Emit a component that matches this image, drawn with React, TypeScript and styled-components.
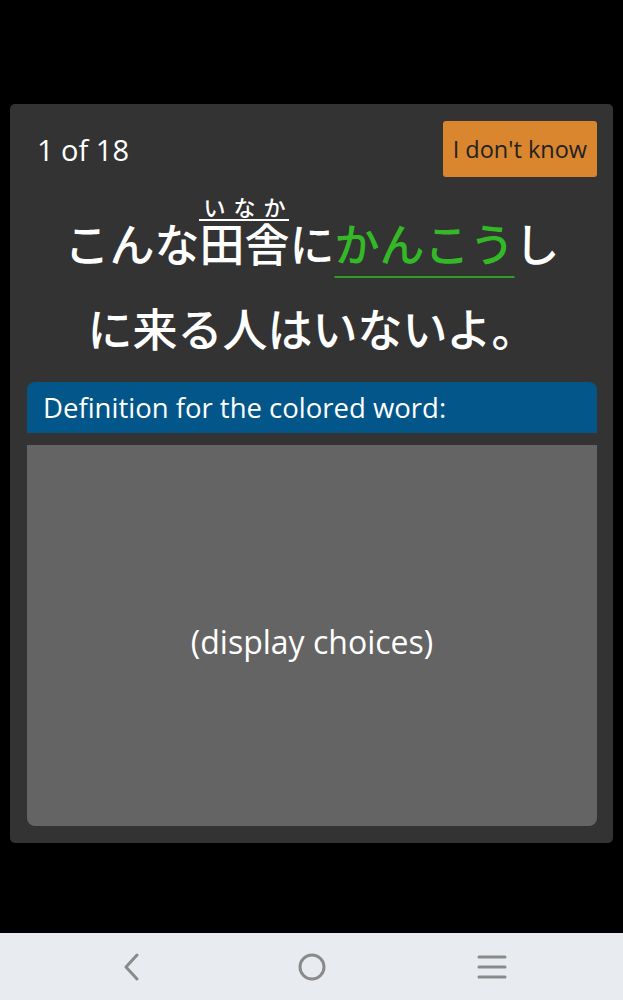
import styled, { createGlobalStyle } from 'styled-components'

const GlobalStyle = createGlobalStyle`
  html, body {
    margin: 0;
    padding: 0;
    background: #000;
  }
  * {
    box-sizing: border-box;
  }
`

const App = () => {
  return (
    <Screen>
      <GlobalStyle />
      <Card>
        <TopRow>
          <Counter>1 of 18</Counter>
          <SkipButton>I don't know</SkipButton>
        </TopRow>
        <Sentence>
          こんな
          <Ruby>
            田舎
            <Reading>
              <span>い</span>
              <span>な</span>
              <span>か</span>
            </Reading>
          </Ruby>
          に<Target>かんこう</Target>しに来る人はいないよ。
        </Sentence>
        <DefinitionHeader>Definition for the colored word:</DefinitionHeader>
        <Choices>(display choices)</Choices>
      </Card>
      <Spacer />
      <NavBar>
        <NavButton aria-label="back">
          <svg width="28" height="28" viewBox="0 0 28 28" fill="none">
            <path d="M19 2 L8 14 L19 26" stroke="#8a8a8a" strokeWidth="3" strokeLinecap="round" strokeLinejoin="round" />
          </svg>
        </NavButton>
        <NavButton aria-label="home">
          <svg width="30" height="30" viewBox="0 0 30 30" fill="none">
            <circle cx="15" cy="15" r="12" stroke="#8a8a8a" strokeWidth="3" />
          </svg>
        </NavButton>
        <NavButton aria-label="menu">
          <svg width="30" height="30" viewBox="0 0 30 30" fill="none">
            <path d="M2 5 H28 M2 15 H28 M2 25 H28" stroke="#8a8a8a" strokeWidth="3" strokeLinecap="round" />
          </svg>
        </NavButton>
      </NavBar>
    </Screen>
  )
}

export default App

const Screen = styled.div`
  display: flex;
  flex-direction: column;
  height: 1000px;
  background: #000;
  font-family: 'Open Sans', 'Noto Sans', 'Noto Sans CJK JP', sans-serif;
`
const Card = styled.div`
  margin: 104px 10px 0;
  height: 739px;
  padding: 17px 16px 17px 17px;
  background: #323332;
  border-radius: 5px;
  display: flex;
  flex-direction: column;
`
const TopRow = styled.div`
  display: flex;
  align-items: center;
  justify-content: space-between;
`
const Counter = styled.div`
  padding-left: 10px;
  color: #fff;
  font-size: 29px;
`
const SkipButton = styled.button`
  height: 56px;
  padding: 0 10px;
  border: none;
  border-radius: 3px;
  background: #d9862e;
  color: #222;
  font-family: 'Open Sans', sans-serif;
  font-size: 23.5px;
`
const Sentence = styled.div`
  margin: 23px auto 12px;
  width: 520px;
  text-align: center;
  color: #fff;
  font-family: 'Noto Sans CJK JP', sans-serif;
  font-weight: 500;
  font-size: 45px;
  line-height: 85px;
`
const Ruby = styled.span`
  position: relative;
  display: inline-block;
  line-height: 45px;
`
const Reading = styled.span`
  position: absolute;
  left: 0;
  right: 0;
  bottom: calc(100% - 1px);
  display: flex;
  justify-content: space-around;
  border-bottom: 2px solid #fff;
  font-size: 22px;
  line-height: 26px;
`
const Target = styled.span`
  color: #34b827;
  text-decoration: underline;
  text-decoration-color: #2f9e25;
  text-decoration-thickness: 2px;
  text-underline-offset: 14px;
`
const DefinitionHeader = styled.div`
  height: 51px;
  padding: 0 16px;
  display: flex;
  align-items: center;
  background: #02568a;
  border-radius: 8px 8px 0 0;
  color: #fff;
  font-size: 27.5px;
`
const Choices = styled.div`
  flex: 1;
  margin-top: 12px;
  padding-top: 12px;
  display: flex;
  align-items: center;
  justify-content: center;
  background: #646464;
  border-radius: 0 0 8px 8px;
  color: #fff;
  font-size: 32px;
`
const Spacer = styled.div`
  flex: 1;
`
const NavBar = styled.div`
  height: 67px;
  display: flex;
  align-items: center;
  justify-content: center;
  gap: 140px;
  background: #e8ecf0;
`
const NavButton = styled.div`
  width: 40px;
  height: 40px;
  display: flex;
  align-items: center;
  justify-content: center;
`
